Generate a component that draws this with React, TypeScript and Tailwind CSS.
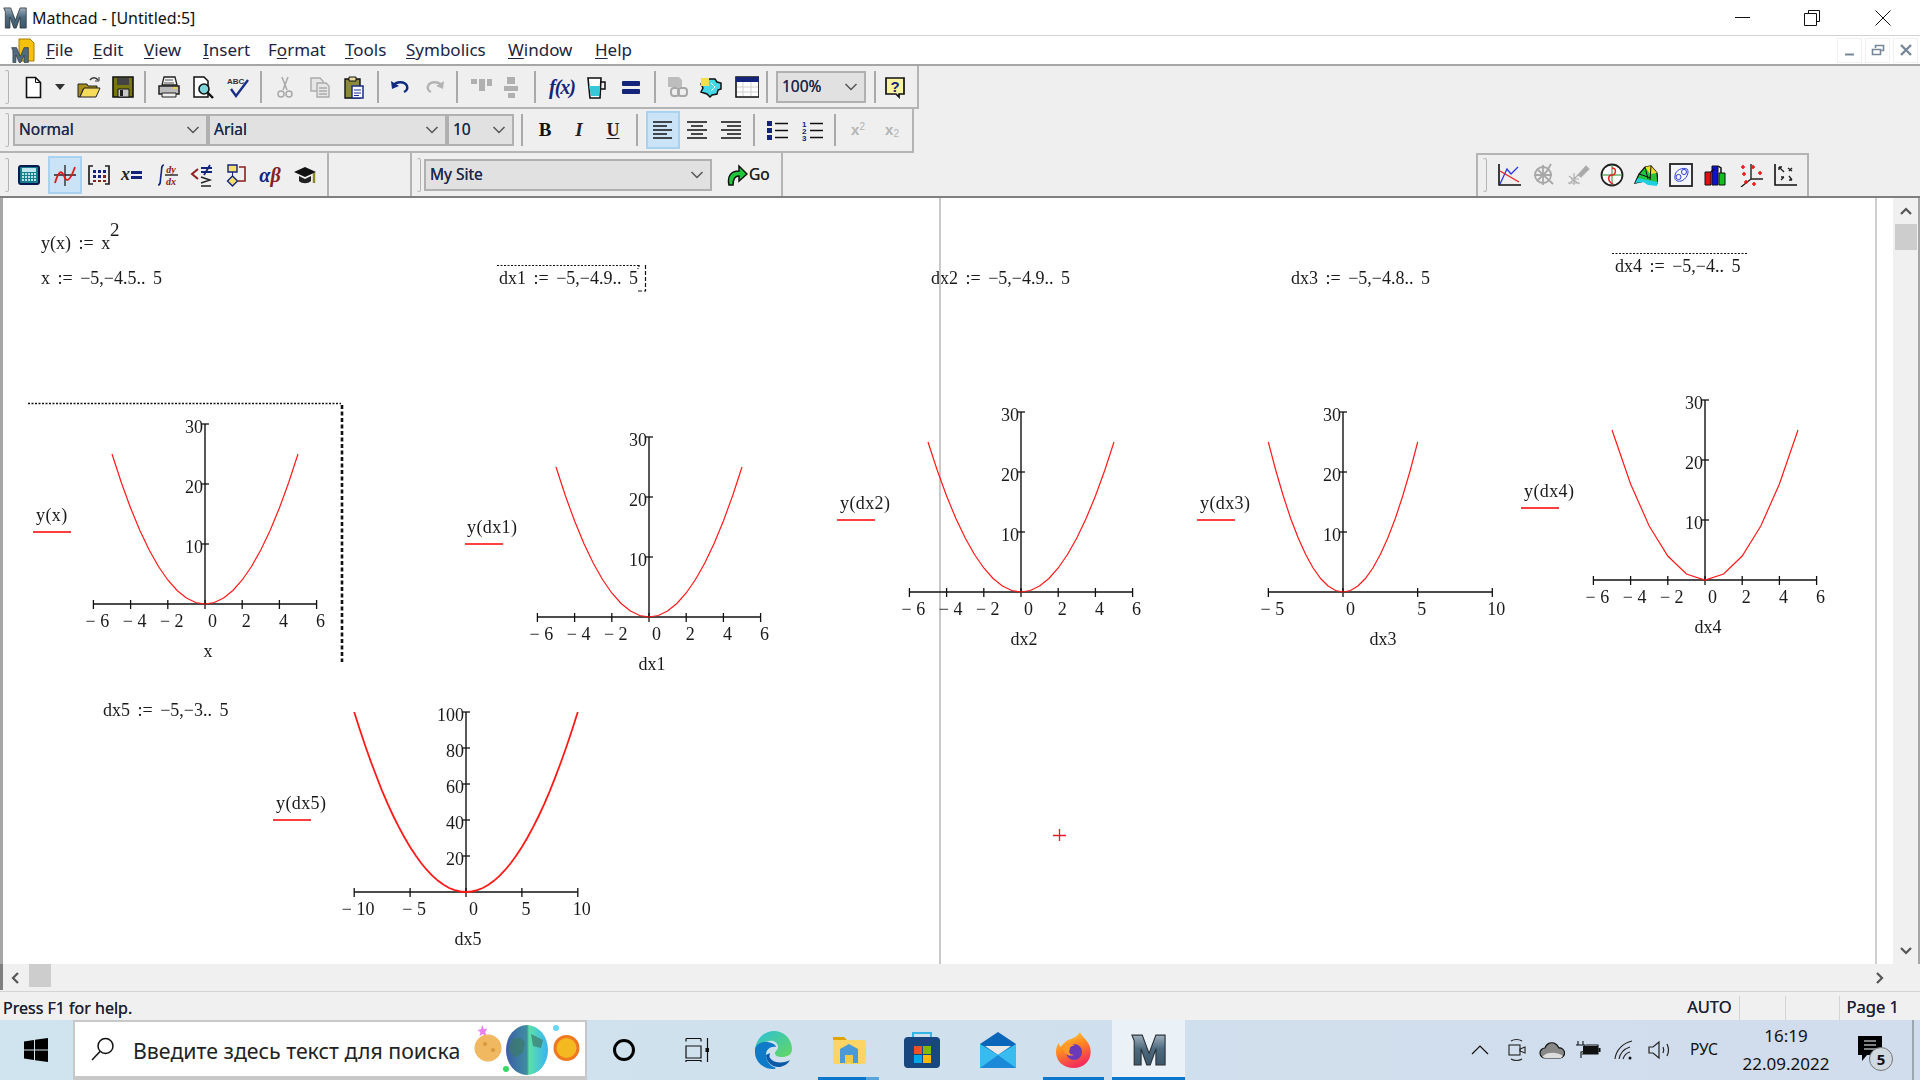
import React from "react";

const pts = (ox: number, oy: number, sx: number, sy: number, from: number, to: number, step: number) => {
  const out: string[] = [];
  const n = Math.round((to - from) / step);
  for (let i = 0; i <= n; i++) {
    const v = from + i * step;
    out.push(`${(ox + v * sx).toFixed(1)},${(oy - v * v * sy).toFixed(1)}`);
  }
  return out.join(" ");
};

type PlotP = {
  ox: number; oy: number; sx: number; sy: number; from: number; to: number; step: number;
  xt: number[]; yt: number[]; name: string; xname: string; lx: number; ul: number; ulx: number; thick?: number; half: number;
};

function Plot({ ox, oy, sx, sy, from, to, step, xt, yt, name, xname, lx, ul, ulx, thick = 1.2, half }: PlotP) {
  const x0 = ox + xt[0] * sx;
  const x1 = ox + xt[xt.length - 1] * sx;
  const top = oy - yt[yt.length - 1] * sy;
  return (
    <g>
      <line x1={x0} y1={oy} x2={x1} y2={oy} stroke="#111" strokeWidth="1.4" />
      <line x1={ox} y1={top} x2={ox} y2={oy} stroke="#111" strokeWidth="1.4" />
      {xt.map((t) => (
        <line key={t} x1={ox + t * sx} x2={ox + t * sx} y1={oy - 4} y2={oy + 5} stroke="#111" strokeWidth="1.3" />
      ))}
      {yt.map((t) => (
        <line key={t} x1={ox - 3} x2={ox + 4} y1={oy - t * sy} y2={oy - t * sy} stroke="#111" strokeWidth="1.3" />
      ))}
      {xt.map((t) => (
        <text key={t} x={ox + t * sx + (t === 0 ? 7.5 : 4)} y={oy + 22.5} textAnchor="middle" fontSize="18">
          {t < 0 ? `− ${-t}` : t}
        </text>
      ))}
      {yt.map((t) => (
        <text key={t} x={ox - 2} y={oy - t * sy + 9} textAnchor="end" fontSize="18">{t}</text>
      ))}
      <polyline points={pts(ox, oy, sx, sy, from, to, step)} fill="none" stroke="#ff1a1a" strokeWidth={thick} />
      <text x={ox + half} y={oy + 53} textAnchor="middle" fontSize="18">{xname}</text>
      <text x={lx} y={ul - 11} fontSize="18" letterSpacing="0.4">{name}</text>
      <line x1={ulx} x2={ulx + 38} y1={ul} y2={ul} stroke="#ff0000" strokeWidth="1.6" />
    </g>
  );
}

const X6 = [-6, -4, -2, 0, 2, 4, 6];
const Y30 = [10, 20, 30];

function Expr({ x, y, l, r, e }: { x: number; y: number; l: string; r: string; e: string }) {
  return (
    <text x={x} y={y} fontSize="18">
      <tspan>{l}</tspan>
      <tspan dx="3"> :=</tspan>
      <tspan dx="3"> {r}</tspan>
      <tspan dx="3"> {e}</tspan>
    </text>
  );
}

function Canvas() {
  return (
    <svg className="absolute inset-0" width="1893" height="766" viewBox="0 198 1893 766" fontFamily="'Liberation Serif', serif" fill="#1a1a1a">
      <text x="41" y="249" fontSize="18">
        <tspan>y(x)</tspan>
        <tspan dx="3"> :=</tspan>
        <tspan dx="3"> x</tspan>
      </text>
      <text x="110" y="236" fontSize="19">2</text>
      <Expr x={41} y={284} l="x" r="−5,−4.5.." e="5" />
      <Expr x={499} y={284} l="dx1" r="−5,−4.9.." e="5" />
      <Expr x={931} y={284} l="dx2" r="−5,−4.9.." e="5" />
      <Expr x={1291} y={284} l="dx3" r="−5,−4.8.." e="5" />
      <Expr x={1615} y={272} l="dx4" r="−5,−4.." e="5" />
      <Expr x={103} y={716} l="dx5" r="−5,−3.." e="5" />

      <line x1="940" x2="940" y1="198" y2="964" stroke="#c9c9c9" strokeWidth="2" />

      <Plot ox={205} oy={604} sx={18.6} sy={6} from={-5} to={5} step={0.5} xt={X6} yt={Y30} name="y(x)" xname="x" lx={36} ul={532} ulx={33} half={3} />
      <Plot ox={649} oy={617} sx={18.6} sy={6} from={-5} to={5} step={0.5} xt={X6} yt={Y30} name="y(dx1)" xname="dx1" lx={467} ul={544} ulx={465} half={3} />
      <Plot ox={1021} oy={592} sx={18.6} sy={6} from={-5} to={5} step={0.5} xt={X6} yt={Y30} name="y(dx2)" xname="dx2" lx={840} ul={520} ulx={837} half={3} />
      <Plot ox={1343} oy={592} sx={14.93} sy={6} from={-5} to={5} step={0.5} xt={[-5, 0, 5, 10]} yt={Y30} name="y(dx3)" xname="dx3" lx={1200} ul={520} ulx={1197} half={40} />
      <Plot ox={1705} oy={580} sx={18.6} sy={6} from={-5} to={5} step={1} xt={X6} yt={Y30} name="y(dx4)" xname="dx4" lx={1524} ul={508} ulx={1521} half={3} />
      <Plot ox={466} oy={892} sx={11.18} sy={1.8} from={-10} to={10} step={0.5} xt={[-10, -5, 0, 5, 10]} yt={[20, 40, 60, 80, 100]} name="y(dx5)" xname="dx5" lx={276} ul={820} ulx={273} thick={1.8} half={2} />

      <line x1="28" x2="341" y1="403.5" y2="403.5" stroke="#111" strokeWidth="1.4" strokeDasharray="2 1.5" />
      <line x1="342" x2="342" y1="405" y2="662" stroke="#111" strokeWidth="2.6" strokeDasharray="4 2.5" />
      <line x1="497" x2="640" y1="265.5" y2="265.5" stroke="#111" strokeWidth="1.2" strokeDasharray="2 1.5" />
      <path d="M639 265v2M645.5 265v26M638 291h8M638 268v1" stroke="#111" strokeWidth="1.2" fill="none" strokeDasharray="4 2" />
      <line x1="1612" x2="1747" y1="253.5" y2="253.5" stroke="#111" strokeWidth="1.2" strokeDasharray="2 1.5" />
      <path d="M1059.5 829v12M1053 835.5h13" stroke="#e02020" strokeWidth="1.3" />
    </svg>
  );
}

const S = ({ children, w = 24 }: { children: React.ReactNode; w?: number }) => (
  <svg width={w} height="24" viewBox={`0 0 ${w} 24`}>{children}</svg>
);

const MGrad = () => (
  <defs>
    <linearGradient id="mg" x1="0" y1="0" x2="0" y2="1">
      <stop offset="0" stopColor="#9fb0bc" />
      <stop offset="0.45" stopColor="#4f6b80" />
      <stop offset="1" stopColor="#3c566a" />
    </linearGradient>
  </defs>
);
const MPoly = () => (
  <path d="M1 1h9l6 16 6-16h8v26h-8V13l-5 14h-3L9 13v14H3V6z" fill="url(#mg)" stroke="#2a3136" strokeWidth="1" />
);

function Grip() {
  return <div className="ml-[5px] h-[34px] w-[4px] shrink-0 rounded-sm border-t border-r border-b border-[#b4b4b4]" />;
}
function Sep({ ml }: { ml: string }) {
  return <div className={`${ml} h-[32px] w-[2px] shrink-0 bg-[#a9a9a9]`} />;
}
function Btn({ w, ml, on, children }: { w: string; ml?: string; on?: boolean; children: React.ReactNode }) {
  return (
    <div className={`${w} ${ml ?? ""} flex h-[38px] shrink-0 items-center justify-center ${on ? "border-2 border-[#a8d2f0] bg-[#cbe3f6]" : ""}`}>
      {children}
    </div>
  );
}
function Combo({ w, ml, text }: { w: string; ml?: string; text: string }) {
  return (
    <div className={`${w} ${ml ?? ""} flex h-[32px] shrink-0 items-center justify-between border-2 border-[#b0b0b0] bg-[#e1e1e1] pl-[4px] pr-[6px] text-[15.5px] text-[#1e2a4a] [text-shadow:0_0_0.5px_#1e2a4a]`}>
      <span>{text}</span>
      <svg width="14" height="8" viewBox="0 0 14 8"><path d="M1.5 1l5.5 5.5L12.5 1" fill="none" stroke="#555" strokeWidth="1.5" /></svg>
    </div>
  );
}

const Lines = ({ d }: { d: string }) => (
  <S><path d={d} stroke="#111" strokeWidth="1.5" fill="none" /></S>
);

const MenuItem = ({ u, rest, w, first }: { u: string; rest: string; w: string; first?: string }) => (
  <div className={`${w} shrink-0`}>
    {first}
    <span className="underline underline-offset-2">{u}</span>
    {rest}
  </div>
);

function GearGray({ kind }: { kind: number }) {
  return (
    <S>
      {kind === 0 ? (
        <g stroke="#a8a8a8" strokeWidth="1.8" fill="none">
          <circle cx="11" cy="12" r="8" />
          <path d="M11 2v20M2 12h18M5 6l16 15M5 18L17 6M19 1l-4 7" />
        </g>
      ) : (
        <g stroke="#b0b0b0" strokeWidth="1.2" fill="none">
          <path d="M2 20h12M8 22V10M3 21l9-9M3 13l10 8M5 16h8" />
          <path d="M12 12l8-9 3 3-8 8z" fill="#a8a8a8" />
        </g>
      )}
    </S>
  );
}

export default function App() {
  return (
    <div className="flex h-[1080px] w-[1920px] flex-col overflow-hidden bg-white font-['Noto_Sans','Open_Sans',sans-serif] text-[#1a1a1a]">
      {/* title bar */}
      <div className="flex h-[36px] shrink-0 items-center border-b border-[#d2d2d2]">
        <svg className="ml-[3px] mr-[5px]" width="24" height="26" viewBox="0 0 31 28"><MGrad /><MPoly /></svg>
        <span className="text-[16px] text-[#111]">Mathcad - [Untitled:5]</span>
        <div className="ml-auto flex items-center pr-[29px]">
          <div className="h-[1px] w-[15px] bg-[#111]" />
          <svg className="ml-[54px]" width="16" height="16" viewBox="0 0 16 16" fill="none" stroke="#111"><path d="M4.5 3V.5h11v11H12.5M.5 3.5h12v12H.5z" /></svg>
          <svg className="ml-[55px]" width="16" height="16" viewBox="0 0 16 16" fill="none" stroke="#111"><path d="M.5.5l15 15M15.5.5l-15 15" /></svg>
        </div>
      </div>
      {/* menu */}
      <div className="flex h-[30px] shrink-0 items-center border-b-2 border-[#a6a6a6] text-[17px] text-[#1b2440]">
        <svg className="ml-[11px] mr-[11px] shrink-0" width="24" height="25" viewBox="0 0 24 25">
          <path d="M8 1h11l4 4v18H8z" fill="#f4c20d" stroke="#a87a00" />
          <g transform="translate(0 9) scale(.62)"><path d="M1 1h8l6 14 6-14h7v24h-7V13l-5 12h-3L8 13v12H3V6z" fill="#4f6b80" stroke="#2a3136" /></g>
        </svg>
        <MenuItem u="F" rest="ile" w="w-[47px]" />
        <MenuItem u="E" rest="dit" w="w-[51px]" />
        <MenuItem u="V" rest="iew" w="w-[59px]" />
        <MenuItem u="I" rest="nsert" w="w-[65px]" />
        <MenuItem first="F" u="o" rest="rmat" w="w-[77px]" />
        <MenuItem u="T" rest="ools" w="w-[61px]" />
        <MenuItem u="S" rest="ymbolics" w="w-[102px]" />
        <MenuItem u="W" rest="indow" w="w-[87px]" />
        <MenuItem u="H" rest="elp" w="w-[40px]" />
        <div className="ml-auto flex h-[25px] items-center gap-[3px] pr-[2px]">
          {[0, 1, 2].map((k) => (
            <div key={k} className="flex h-[25px] w-[25px] items-center justify-center border border-[#f0f0f0]">
              <svg width="14" height="14" viewBox="0 0 14 14" fill="none" stroke="#76879a" strokeWidth="2">
                {k === 0 && <path d="M2 11.5h9" />}
                {k === 1 && <path d="M1.5 6.5h8v5h-8zM4.5 5V2.5h8v5h-2" strokeWidth="1.6" />}
                {k === 2 && <path d="M2 2l10 10M12 2L2 12" strokeWidth="2.4" />}
              </svg>
            </div>
          ))}
        </div>
      </div>

      {/* toolbars */}
      <div className="flex h-[132px] shrink-0 flex-col border-b-2 border-[#7f7f7f] bg-[#efefef] text-[#222]">
        {/* row 1 */}
        <div className="flex h-[43px] w-[919px] items-center border-r-2 border-b-2 border-[#b4b4b4]">
          <Grip />
          <Btn w="w-[34px]" ml="ml-[7px]"><S><path d="M5.5 2.5h9l5 5v15h-14z" fill="#fff" stroke="#111" strokeWidth="1.6" /><path d="M14.5 2.5v5h5" fill="none" stroke="#111" /></S></Btn>
          <Btn w="w-[20px]"><svg width="10" height="6" viewBox="0 0 10 6"><path d="M0 0h10L5 6z" fill="#333" /></svg></Btn>
          <Btn w="w-[34px]" ml="ml-[2px]"><S><path d="M1 9h9l1 2h9v3H6l-3 8H1z" fill="#a88f18" stroke="#222" /><path d="M3 22l4-9h16l-4 9z" fill="#f5dc5a" stroke="#222" /><path d="M13 5c2-3 6-3 8 0" fill="none" stroke="#333" strokeWidth="1.4" /><path d="M22 2v4h-4" fill="none" stroke="#333" /></S></Btn>
          <Btn w="w-[32px]" ml="ml-[1px]"><S><path d="M2 2h20v20H2z" fill="#77760f" stroke="#111" strokeWidth="1.6" /><path d="M6 3h12v7H6z" fill="#444" /><path d="M7 14h11v8H7z" fill="#c8c8c8" stroke="#111" /><path d="M9 15h3v6H9z" fill="#222" /></S></Btn>
          <Sep ml="ml-[5px]" />
          <Btn w="w-[34px]" ml="ml-[6px]"><S><path d="M7 2h11l2 8H5z" fill="#f4f4f4" stroke="#222" strokeWidth="1.3" /><path d="M2 11h20v8H2z" fill="#bbb" stroke="#222" strokeWidth="1.5" /><path d="M5 18h14v4H5z" fill="#eee" stroke="#222" /><path d="M8 5h8M7 8h10" stroke="#555" /><path d="M16 13h4" stroke="#e8d040" strokeWidth="2" /></S></Btn>
          <Btn w="w-[34px]"><S><path d="M3 2h10l4 4v16H3z" fill="#fff" stroke="#111" strokeWidth="1.5" /><circle cx="13" cy="14" r="5" fill="#7ed4d8" stroke="#111" strokeWidth="1.6" /><path d="M17 18l5 5" stroke="#111" strokeWidth="2.4" /></S></Btn>
          <Btn w="w-[34px]" ml="ml-[1px]"><S><text x="1" y="9" fontSize="8" fontWeight="700" fill="#333" fontFamily="'Liberation Sans'">ABC</text><path d="M5 14l5 7L22 5" fill="none" stroke="#1a2f8a" strokeWidth="2.4" /></S></Btn>
          <Sep ml="ml-[5px]" />
          <Btn w="w-[34px]" ml="ml-[6px]"><S><g stroke="#a8a8a8" strokeWidth="1.5" fill="none"><path d="M9 2l5 13M15 2L10 15" /><circle cx="8" cy="19" r="3" /><circle cx="16" cy="19" r="3" /></g></S></Btn>
          <Btn w="w-[34px]" ml="ml-[1px]"><S><g stroke="#aaa" fill="#e6e6e6" strokeWidth="1.4"><path d="M3 3h9l3 3v10H3z" /><path d="M9 8h9l3 3v11H9z" /><path d="M11 13h8M11 16h8M11 19h8" /></g></S></Btn>
          <Btn w="w-[34px]"><S><path d="M3 4h15v19H3z" fill="#8a8a3a" stroke="#111" strokeWidth="1.4" /><path d="M7 2h7v4H7z" fill="#e8dca0" stroke="#111" /><path d="M10 11h11v12H10z" fill="#fff" stroke="#1a2f8a" strokeWidth="1.5" /><path d="M12 15h7M12 18h7M12 20.5h5" stroke="#1a2f8a" /></S></Btn>
          <Sep ml="ml-[6px]" />
          <Btn w="w-[34px]" ml="ml-[4px]"><S><path d="M5 11c3-5 12-5 14 0 1 3-1 5-3 6" fill="none" stroke="#0f2a80" strokeWidth="2.4" /><path d="M3 6l1 8 7-3z" fill="#0f2a80" /></S></Btn>
          <Btn w="w-[34px]" ml="ml-[1px]"><S><path d="M19 11c-3-5-12-5-14 0-1 3 1 5 3 6" fill="none" stroke="#b4b4b4" strokeWidth="2.4" /><path d="M21 6l-1 8-7-3z" fill="#b4b4b4" /></S></Btn>
          <Sep ml="ml-[4px]" />
          <Btn w="w-[34px]" ml="ml-[6px]"><S><path d="M2 4h6v5H2zM10 4h6v12h-6zM18 4h5v7h-5z" fill="#b0b0b0" /></S></Btn>
          <Btn w="w-[28px]"><S><path d="M7 2h8v7H7zM4 11h14v5H4zM8 18h7v5H8z" fill="#b0b0b0" /></S></Btn>
          <Sep ml="ml-[8px]" />
          <Btn w="w-[34px]" ml="ml-[9px]"><span className="font-['Liberation_Serif'] text-[20px] font-bold italic tracking-[-1px] text-[#14247a]">f(x)</span></Btn>
          <Btn w="w-[34px]"><S><path d="M4 3h13l-1 20H6z" fill="#fff" stroke="#111" strokeWidth="1.6" /><path d="M5 11h11l-1 10H7z" fill="#35c8d8" /><path d="M17 7h4v7h-4" fill="none" stroke="#111" strokeWidth="1.5" /></S></Btn>
          <Btn w="w-[34px]" ml="ml-[1px]"><S><rect x="3" y="6" width="18" height="5" rx="1" fill="#14247a" /><rect x="3" y="14" width="18" height="5" rx="1" fill="#14247a" /></S></Btn>
          <Sep ml="ml-[6px]" />
          <Btn w="w-[34px]" ml="ml-[4px]"><S><path d="M3 2h11l3 3v7H3z" fill="#bdbdbd" /><rect x="6" y="13" width="8" height="8" rx="3" fill="none" stroke="#a8a8a8" strokeWidth="2" /><rect x="13" y="13" width="9" height="8" rx="3" fill="none" stroke="#a8a8a8" strokeWidth="2" /></S></Btn>
          <Btn w="w-[34px]"><S><path d="M5 4h11l2 3 4 1v6l-3 1-1 4-5 1-2 2-3-3-6-2 2-4-2-4z" fill="#45d8e8" stroke="#111" strokeWidth="1.5" /><path d="M2 3h8v8H2z" fill="#f0e050" /><path d="M12 8l4 4-4 4" stroke="#fff" fill="none" /></S></Btn>
          <Btn w="w-[34px]" ml="ml-[2px]"><S><path d="M1 2h23v20H1z" fill="#fff" stroke="#111" strokeWidth="1.6" /><path d="M1 2h23v5H1z" fill="#14247a" /><path d="M8 7v14M16 7v14M2 12h21M2 17h21" stroke="#d0d0d0" /></S></Btn>
          <Sep ml="ml-[2px]" />
          <Combo w="w-[90px]" ml="ml-[8px]" text="100%" />
          <Sep ml="ml-[8px]" />
          <Btn w="w-[34px]" ml="ml-[2px]"><S><path d="M3 3h18v16h-5v3l-3-3H3z" fill="#fbf4a0" stroke="#111" strokeWidth="1.7" /><text x="12" y="16.5" textAnchor="middle" fontSize="15" fontWeight="700" fill="#14247a" fontFamily="'Liberation Sans'">?</text></S></Btn>
        </div>
        {/* row 2 */}
        <div className="flex h-[44px] w-[914px] items-center border-r-2 border-b-2 border-[#b4b4b4]">
          <Grip />
          <Combo w="w-[195px]" ml="ml-[4px]" text="Normal" />
          <Combo w="w-[239px]" text="Arial" />
          <Combo w="w-[67px]" text="10" />
          <Sep ml="ml-[7px]" />
          <Btn w="w-[34px]" ml="ml-[5px]"><span className="font-['Liberation_Serif'] text-[19px] font-bold text-[#111]">B</span></Btn>
          <Btn w="w-[34px]"><span className="font-['Liberation_Serif'] text-[19px] font-bold italic text-[#222]">I</span></Btn>
          <Btn w="w-[34px]"><span className="font-['Liberation_Serif'] text-[18px] font-bold text-[#222] underline underline-offset-2">U</span></Btn>
          <Sep ml="ml-[6px]" />
          <Btn w="w-[34px]" ml="ml-[8px]" on><Lines d="M2 4h19M2 8h14M2 12h19M2 16h14M2 20h19" /></Btn>
          <Btn w="w-[33px]"><Lines d="M2 4h20M6 8h12M2 12h20M6 16h12M2 20h20" /></Btn>
          <Btn w="w-[34px]" ml="ml-[1px]"><Lines d="M2 4h20M8 8h14M2 12h20M8 16h14M2 20h20" /></Btn>
          <Sep ml="ml-[5px]" />
          <Btn w="w-[34px]" ml="ml-[5px]"><S><path d="M2 3h5v5H2zM2 10h5v5H2zM2 17h5v5H2z" fill="#14247a" /><path d="M10 5.5h13M10 12.5h13M10 19.5h13" stroke="#111" strokeWidth="1.5" /></S></Btn>
          <Btn w="w-[34px]" ml="ml-[1px]"><S><text x="2" y="9" fontSize="8" fontWeight="700" fill="#14247a" fontFamily="'Liberation Sans'">1</text><text x="2" y="16" fontSize="8" fontWeight="700" fill="#14247a" fontFamily="'Liberation Sans'">2</text><text x="2" y="23" fontSize="8" fontWeight="700" fill="#14247a" fontFamily="'Liberation Sans'">3</text><path d="M10 5.5h13M10 12.5h13M10 19.5h13" stroke="#111" strokeWidth="1.5" /></S></Btn>
          <Sep ml="ml-[5px]" />
          <Btn w="w-[34px]" ml="ml-[5px]"><span className="font-['Liberation_Sans'] text-[15px] font-bold text-[#b4b4b4]">x<sup className="font-normal text-[10px]">2</sup></span></Btn>
          <Btn w="w-[34px]"><span className="font-['Liberation_Sans'] text-[15px] font-bold text-[#b4b4b4]">x<sub className="font-normal text-[10px]">2</sub></span></Btn>
        </div>
        {/* row 3 */}
        <div className="flex h-[43px] items-center">
          <div className="flex h-full w-[329px] shrink-0 items-center border-r-2 border-[#b4b4b4]">
            <Grip />
            <Btn w="w-[34px]" ml="ml-[3px]"><S><rect x="2" y="3" width="20" height="18" rx="2" fill="#167d8c" stroke="#0a1a50" strokeWidth="2" /><rect x="5" y="5" width="14" height="4" fill="#bfe6ee" /><path d="M5 11h14M5 14h14M5 17h14" stroke="#bde0e6" strokeWidth="1.8" strokeDasharray="2 1" /></S></Btn>
            <Btn w="w-[34px]" ml="ml-[2px]" on><S><path d="M1 12h22M12 2v21" stroke="#222" strokeWidth="1.3" /><path d="M2 20c4-14 7-12 9-7s5 8 11-9" fill="none" stroke="#e01818" strokeWidth="1.8" /></S></Btn>
            <Btn w="w-[34px]"><S><path d="M6 3H2v18h4M18 3h4v18h-4" fill="none" stroke="#222" strokeWidth="1.7" /><path d="M6 7h3v3H6zM11 7h3v3h-3zM16 7h3v3h-3z" fill="#14247a" /><path d="M6 12h3v3H6zM11 12h3v3h-3z" fill="#14247a" /><path d="M16 12h3v3h-3zM6 17h3v2H6zM11 17h3v2h-3zM16 17h3v2h-3z" fill="#8a2020" /></S></Btn>
            <Btn w="w-[32px]"><span className="font-['Liberation_Serif'] text-[18px] font-bold italic text-[#222]">x</span><svg width="13" height="10" viewBox="0 0 13 10"><path d="M1 1h11v3H1zM1 6h11v3H1z" fill="#14247a" /></svg></Btn>
            <Btn w="w-[36px]" ml="ml-[2px]"><S><path d="M8 2c-3 0-2 4-3 10s0 10-3 10" fill="none" stroke="#14247a" strokeWidth="1.6" /><path d="M9 12h13" stroke="#222" strokeWidth="1.4" /><text x="15" y="10" textAnchor="middle" fontSize="10" fontStyle="italic" fontWeight="700" fill="#8a2020" fontFamily="'Liberation Serif'">dy</text><text x="15" y="22" textAnchor="middle" fontSize="10" fontStyle="italic" fontWeight="700" fill="#8a2020" fontFamily="'Liberation Serif'">dx</text></S></Btn>
            <Btn w="w-[32px]"><S><path d="M8 6l-6 5 6 5" fill="none" stroke="#8a2020" strokeWidth="2" /><path d="M11 5h11M11 9h11M14 12l6-10" stroke="#14247a" strokeWidth="1.8" /><path d="M11 14l9 3-9 3M11 23h10" fill="none" stroke="#222" strokeWidth="1.4" /></S></Btn>
            <Btn w="w-[34px]"><S><path d="M5 2h9v7H5z" fill="#f4e070" stroke="#14247a" strokeWidth="1.4" /><path d="M9.5 13l5 5-5 5-5-5z" fill="#f4e070" stroke="#14247a" strokeWidth="1.4" /><path d="M9.5 9v4" stroke="#14247a" /><path d="M16 4h6v14h-7" fill="none" stroke="#8a2020" strokeWidth="1.6" /></S></Btn>
            <Btn w="w-[36px]"><span className="font-['Liberation_Serif'] text-[20px] font-bold italic text-[#14247a]">α</span><span className="font-['Liberation_Serif'] text-[20px] font-bold italic text-[#8a2020]">β</span></Btn>
            <Btn w="w-[34px]"><S><path d="M1 9l11-5 11 5-11 5z" fill="#111" /><path d="M6 13v5c3 3 9 3 12 0v-5l-6 3z" fill="#222" /><path d="M21 10v10" stroke="#8a8a20" strokeWidth="2.4" /></S></Btn>
          </div>
          <div className="flex h-full w-[83px] shrink-0 border-r-2 border-[#b4b4b4]" />
          <div className="flex h-full w-[371px] shrink-0 items-center border-r-2 border-[#b4b4b4]">
            <Grip />
            <Combo w="w-[288px]" ml="ml-[3px]" text="My Site" />
            <Btn w="w-[24px]" ml="ml-[13px]"><svg width="22" height="24" viewBox="0 0 22 24"><path d="M3 22C1 13 5 8 13 8V3l8 8-8 7v-5c-4 0-6 3-6 9z" fill="#1fc83a" stroke="#111" strokeWidth="1.5" /></svg></Btn>
            <span className="text-[15.5px] text-[#222] [text-shadow:0_0_0.5px_#222]">Go</span>
          </div>
          <div className="flex-1" />
          <div className="mr-[111px] flex h-full w-[333px] shrink-0 items-center border-x-2 border-t-2 border-[#b4b4b4] pb-[2px]">
            <Grip />
            <Btn w="w-[34px]" ml="ml-[5px]"><S><path d="M2 1v21h22" fill="none" stroke="#111" strokeWidth="1.6" /><path d="M3 21L10 6l4 5 7-7" fill="none" stroke="#2a3ae0" strokeWidth="1.3" /><path d="M3 8l19 11" stroke="#e82020" strokeWidth="1.3" /></S></Btn>
            <Btn w="w-[35px]"><GearGray kind={0} /></Btn>
            <Btn w="w-[34px]"><GearGray kind={1} /></Btn>
            <Btn w="w-[34px]"><S><circle cx="12" cy="12" r="10.5" fill="#fff" stroke="#222" strokeWidth="1.8" /><path d="M12 2v20M2 12h20" stroke="#1a8a2a" /><path d="M12 5c5 0 4 7 0 7s-5 6 1 9" fill="none" stroke="#e82020" strokeWidth="1.5" /></S></Btn>
            <Btn w="w-[34px]"><S><path d="M1 20l4-9 6-7 6-1 6 7 1 10-9 1-5-3z" fill="#1ec83a" stroke="#111" strokeWidth="1.3" /><path d="M11 4l6-1 6 7-7 1z" fill="#f0e020" /><path d="M1 20l3-5 9 2 11 2-1 4-9-1-5-3z" fill="#20d0e0" /><path d="M5 11l12 4M11 4l3 12M17 3l-1 14" stroke="#111" strokeWidth="1" fill="none" /></S></Btn>
            <Btn w="w-[35px]"><S><rect x="1" y="1" width="22" height="22" fill="#f4f6ff" stroke="#222" strokeWidth="1.8" /><path d="M6 13c0-6 8-9 12-7 3 3-1 11-6 12-4 1-7-1-6-5z" fill="none" stroke="#3040d0" /><ellipse cx="9.5" cy="14" rx="2.5" ry="2.6" fill="none" stroke="#3040d0" /><ellipse cx="15" cy="9" rx="2.5" ry="2.6" fill="none" stroke="#3040d0" /></S></Btn>
            <Btn w="w-[35px]"><S><path d="M1 9h6v13H1z" fill="#e01010" stroke="#111" /><path d="M8 3h6v19H8z" fill="#1010d0" stroke="#111" /><path d="M15 10h6v12h-6z" fill="#10c020" stroke="#111" /><path d="M7 9l3-3M14 3l3 2v5" fill="none" stroke="#111" strokeWidth="1.5" /></S></Btn>
            <Btn w="w-[35px]"><S><path d="M12 1v15M24 16H12M12 16L2 24" stroke="#222" strokeWidth="1.4" /><path d="M4 2v4M2 4h4M14 2v4M12 4h4M5 9v4M3 11h4M21 8v4M19 10h4M7 17v4M5 19h4M15 19v4M13 21h4" stroke="#e81818" strokeWidth="1.6" /></S></Btn>
            <Btn w="w-[34px]"><S><path d="M2 1v21h22" fill="none" stroke="#111" strokeWidth="1.6" /><path d="M6 4l5 5M6 4h3M6 4v3M15 5l4 3M19 5l-3 3M8 17l3-3M11 14H8M16 13l3 4M19 17h-3" stroke="#222" strokeWidth="1.4" fill="none" /></S></Btn>
          </div>
        </div>
      </div>

      {/* worksheet */}
      <div className="flex min-h-0 flex-1 [filter:blur(0.3px)]">
        <div className="relative flex-1 border-l-[3px] border-[#a6a6a6]">
          <div className="absolute -left-[3px] top-0">
            <Canvas />
          </div>
          <div className="absolute right-[16px] top-0 h-full w-[2px] bg-[#cfcfcf]" />
        </div>
        <div className="relative flex w-[27px] shrink-0 flex-col items-center border-r-2 border-[#a6a6a6] bg-[#f0f0f0]">
          <svg className="mt-[9px]" width="12" height="8" viewBox="0 0 12 8"><path d="M1 7l5-5 5 5" fill="none" stroke="#555" strokeWidth="2.2" /></svg>
          <div className="mt-[9px] h-[26px] w-[22px] bg-[#cdcdcd]" />
          <svg className="mt-auto mb-[9px]" width="12" height="8" viewBox="0 0 12 8"><path d="M1 1l5 5 5-5" fill="none" stroke="#555" strokeWidth="2.2" /></svg>
        </div>
      </div>
      {/* h scroll */}
      <div className="flex h-[28px] shrink-0 items-start border-b border-[#d4d4d4] bg-[#f0f0f0]">
        <div className="h-[26px] w-[3px] bg-[#7f7f7f]" />
        <svg className="ml-[8px] mt-[8px]" width="8" height="12" viewBox="0 0 8 12"><path d="M7 1L2 6l5 5" fill="none" stroke="#555" strokeWidth="2.2" /></svg>
        <div className="ml-[10px] h-[23px] w-[22px] bg-[#cdcdcd]" />
        <svg className="ml-auto mr-[36px] mt-[8px]" width="8" height="12" viewBox="0 0 8 12"><path d="M1 1l5 5-5 5" fill="none" stroke="#555" strokeWidth="2.2" /></svg>
      </div>
      {/* status */}
      <div className="flex h-[28px] shrink-0 items-center bg-[#f0f0f0] pt-[3px] text-[16px] text-[#1e2236] [text-shadow:0_0_0.5px_#1e2236]">
        <span className="pl-[3px]">Press F1 for help.</span>
        <span className="ml-auto text-[16.5px]">AUTO</span>
        <div className="ml-[7px] h-[24px] w-[47px] border-x border-[#d4d4d4]" />
        <div className="ml-[53px] h-[24px] w-[1px] bg-[#d4d4d4]" />
        <span className="ml-[7px] mr-[21px] text-[16.5px]">Page 1</span>
      </div>

      {/* taskbar */}
      <div className="flex h-[60px] shrink-0 items-center bg-gradient-to-r from-[#cfe4ee] to-[#d1dcec] text-[#111]">
        <svg className="ml-[24px]" width="24" height="24" viewBox="0 0 24 24" fill="#000"><path d="M0 3.4L10 2v9.5H0zM11 1.8L24 0v11.5H11zM0 12.5h10V22L0 20.6zM11 12.5h13V24l-13-1.8z" /></svg>
        <div className="ml-[25px] flex h-[60px] w-[514px] shrink-0 items-center border-2 border-b-[4px] border-[#c8c8c8] bg-white">
          <svg className="ml-[16px]" width="24" height="24" viewBox="0 0 24 24" fill="none" stroke="#111" strokeWidth="1.5"><circle cx="14.5" cy="9" r="7.5" /><path d="M9 14.5L1 23" /></svg>
          <span className="ml-[18px] pt-[3px] text-[21.3px] text-[#222]">Введите здесь текст для поиска</span>
          <svg className="ml-auto mr-[4px] shrink-0" width="112" height="54" viewBox="0 0 112 54">
            <defs>
              <linearGradient id="earth" x1="0" x2="1" y1="0" y2="0">
                <stop offset="0" stopColor="#3c5ea8" /><stop offset="0.5" stopColor="#3f8da0" /><stop offset="0.55" stopColor="#5ce0a8" /><stop offset="1" stopColor="#38b4f4" />
              </linearGradient>
            </defs>
            <path d="M12 0l2 6 5-1-3 5 2 6-6-3-4 3 1-6-4-3 5-1z" fill="#e880f0" transform="translate(5 3) scale(.7)" />
            <circle cx="19" cy="26" r="13.5" fill="#f0b860" />
            <circle cx="16" cy="22" r="2" fill="#d8983c" /><circle cx="24" cy="28" r="2" fill="#d8983c" />
            <ellipse cx="58" cy="28" rx="21" ry="25" fill="url(#earth)" />
            <path d="M42 18c6-4 10-2 14 2l-2 10-8 6-6-8zM62 12l12 6-2 8-8-2z" fill="#3c7a68" opacity=".7" />
            <circle cx="97.5" cy="26" r="13" fill="#f07820" />
            <circle cx="97.5" cy="26" r="10" fill="#f4b820" />
            <circle cx="37" cy="47" r="3" fill="#38d868" />
            <circle cx="87" cy="6" r="3" fill="#68d8f0" />
          </svg>
        </div>
        <svg className="ml-[25px]" width="24" height="24" viewBox="0 0 24 24"><circle cx="12" cy="12" r="9.5" fill="none" stroke="#000" strokeWidth="3" /></svg>
        <svg className="ml-[49px]" width="24" height="24" viewBox="0 0 24 24" fill="none" stroke="#111" strokeWidth="1.2"><path d="M1 .5h15M1 .5v3M16 .5v3M1 8h15v12H1zM1 24v-1.5h15V24" /><path d="M22.5 0v24" /><rect x="20.5" y="10" width="4" height="4" fill="#111" stroke="none" /></svg>
        <svg className="ml-[45px]" width="38" height="38" viewBox="0 0 38 38">
          <defs>
            <linearGradient id="edge" x1="0" y1="0" x2="1" y2="1"><stop offset="0" stopColor="#2cc0d8" /><stop offset="1" stopColor="#64d860" /></linearGradient>
          </defs>
          <path d="M1 19C2 7 11 0 20 0c10 0 18 8 18 18 0 6-5 8-10 8-4 0-7-1-7-4 0-2 3-3 3-6 0-4-4-7-9-6C8 11 3 14 1 19z" fill="url(#edge)" />
          <path d="M1 19c0-5 6-9 13-8 5 1 8 3 8 5-5-1-10 2-10 8 0 6 4 11 10 13-1 1-2 1-3 1C9 38 0 30 1 19z" fill="#0f7bc8" />
          <path d="M12 24c0 7 7 13 14 12 4-1 8-3 10-7-5 3-16 4-20-2-1-1 0-5 0-5z" fill="#0a5aa8" />
        </svg>
        <div className="relative ml-[26px] flex h-[60px] w-[61px] shrink-0 items-center justify-center">
          <svg width="34" height="28" viewBox="0 0 34 28"><path d="M1 4V1h11l3 3h17a2 2 0 012 2v20a2 2 0 01-2 2H3a2 2 0 01-2-2z" fill="#fcd565" /><path d="M1 4V1h11l3 3z" fill="#e0a400" /><path d="M8 27V13l9-5 9 5v14h-5v-8h-8v8z" fill="#4a9ad8" /><path d="M13 19h8v8h-8z" fill="#f0c84c" /></svg>
          <div className="absolute bottom-0 left-0 flex h-[3px] w-[61px]"><div className="w-[48px] bg-[#0a76cc]" /><div className="flex-1 bg-[#5aa4dc]" /></div>
        </div>
        <svg className="ml-[25px]" width="36" height="36" viewBox="0 0 36 36">
          <path d="M9 8V1h18v7" fill="none" stroke="#35b4e8" strokeWidth="2" />
          <rect y="5" width="36" height="31" rx="4" fill="#18467e" />
          <path d="M10 14h8v8h-8z" fill="#f25022" /><path d="M19 14h8v8h-8z" fill="#7fba00" /><path d="M10 23h8v8h-8z" fill="#00a4ef" /><path d="M19 23h8v8h-8z" fill="#ffb900" />
        </svg>
        <svg className="ml-[40px]" width="36" height="36" viewBox="0 0 36 36">
          <path d="M0 12L18 0l18 12v24H0z" fill="#0a66b8" />
          <path d="M5 14h26l-13 9z" fill="#e8e8e8" />
          <path d="M0 12l18 11 18-11v24H0z" fill="#38bcf0" />
          <path d="M0 36l18-13 18 13z" fill="#1a8ad8" />
        </svg>
        <div className="relative ml-[27px] flex h-[60px] w-[69px] shrink-0 items-center justify-center pr-[8px]">
          <svg width="36" height="36" viewBox="0 0 36 36">
            <defs>
              <linearGradient id="ff" x1="0" y1="0" x2="0.4" y2="1"><stop offset="0" stopColor="#ffe14a" /><stop offset="0.5" stopColor="#ff8a1f" /><stop offset="1" stopColor="#f5305a" /></linearGradient>
            </defs>
            <path d="M24 0c1 4 8 8 10 15 3 12-5 21-16 21S0 29 0 20c0-4 1-7 3-9 0 2 1 3 2 4 1-3 4-5 7-7 4-1 9-3 12-8z" fill="url(#ff)" />
            <circle cx="18" cy="20" r="8" fill="#6a3ab8" />
            <path d="M7 16c3-4 8-5 12-3-3 1-6 2-5 4-2 3 0 6 4 6-5 2-11-1-11-7z" fill="#ff9a28" />
          </svg>
          <div className="absolute bottom-0 left-0 right-[8px] h-[3px] bg-[#0a76cc]" />
        </div>
        <div className="relative flex h-[60px] w-[73px] shrink-0 items-center justify-center bg-[#eaf1f7]">
          <svg width="37" height="32" viewBox="0 0 31 28">
            <path d="M1 1h9l6 16 6-16h8v26h-8V13l-5 14h-3L9 13v14H3V6z" fill="url(#mg)" stroke="#2a3136" strokeWidth="1" />
          </svg>
          <div className="absolute bottom-0 left-0 right-0 h-[3px] bg-[#0a76cc]" />
        </div>

        <svg className="ml-[286px]" width="18" height="10" viewBox="0 0 18 10"><path d="M1 9l8-8 8 8" fill="none" stroke="#111" strokeWidth="1.2" /></svg>
        <svg className="ml-[19px]" width="18" height="24" viewBox="0 0 18 24" fill="none" stroke="#222" strokeWidth="1.1"><rect x="1" y="7" width="11" height="10" /><path d="M12 11l5-2v6l-5-2zM3 3c3-2 8-2 11 0M3 21c3 2 8 2 11 0" /></svg>
        <svg className="ml-[13px]" width="26" height="18" viewBox="0 0 26 18"><path d="M6 17a5 5 0 010-10c1-4 5-6 9-5 3 1 4 3 5 5a5 5 0 011 10z" fill="#888" stroke="#111" strokeWidth="1.2" /><path d="M3 16c4-5 14-6 21-1l-2 2H6z" fill="#ddd" /></svg>
        <svg className="ml-[10px]" width="26" height="18" viewBox="0 0 26 18"><path d="M3 0v4M8 0v4M1 4h9v4c0 2-2 3-4 3v6M7 13h16V4H11" fill="none" stroke="#111" strokeWidth="1.1" /><rect x="8" y="5" width="15" height="8" fill="#111" /><rect x="23.5" y="7" width="2" height="4" fill="#111" /></svg>
        <svg className="ml-[13px]" width="22" height="20" viewBox="0 0 22 20" fill="none" stroke="#222" strokeWidth="1.1"><path d="M1 19C2 10 9 3 18 1M5 19c1-6 5-10 11-12M9 19c1-3 3-6 7-7" /><circle cx="16" cy="18" r="1.5" fill="#111" stroke="none" /></svg>
        <svg className="ml-[12px]" width="24" height="20" viewBox="0 0 24 20" fill="none" stroke="#222" strokeWidth="1.2"><path d="M1 7h4l6-5v16l-6-5H1zM15 7c1 2 1 4 0 6M19 4c2 4 2 8 0 12" /></svg>
        <span className="ml-[18px] w-[32px] shrink-0 text-[15.5px]">РУС</span>
        <div className="ml-[19px] flex w-[90px] shrink-0 flex-col items-center text-[17px] leading-[28px]">
          <span>16:19</span>
          <span>22.09.2022</span>
        </div>
        <div className="relative ml-[27px] h-[24px] w-[24px] shrink-0 -translate-y-[2px]">
          <svg width="24" height="26" viewBox="0 0 24 26"><path d="M0 0h24v19H9l-5 6v-6H0z" fill="#000" /><path d="M6 5h12M6 9h12M6 13h12" stroke="#fff" strokeWidth="1.1" /></svg>
          <div className="absolute left-[11px] top-[11px] flex h-[24px] w-[24px] items-center justify-center rounded-full border border-[#777] bg-[#d0d8e0] text-[15px] font-bold">5</div>
        </div>
        <div className="ml-auto mr-[6px] h-[60px] w-[2px] bg-[#9ba6b0]" />
      </div>
    </div>
  );
}
